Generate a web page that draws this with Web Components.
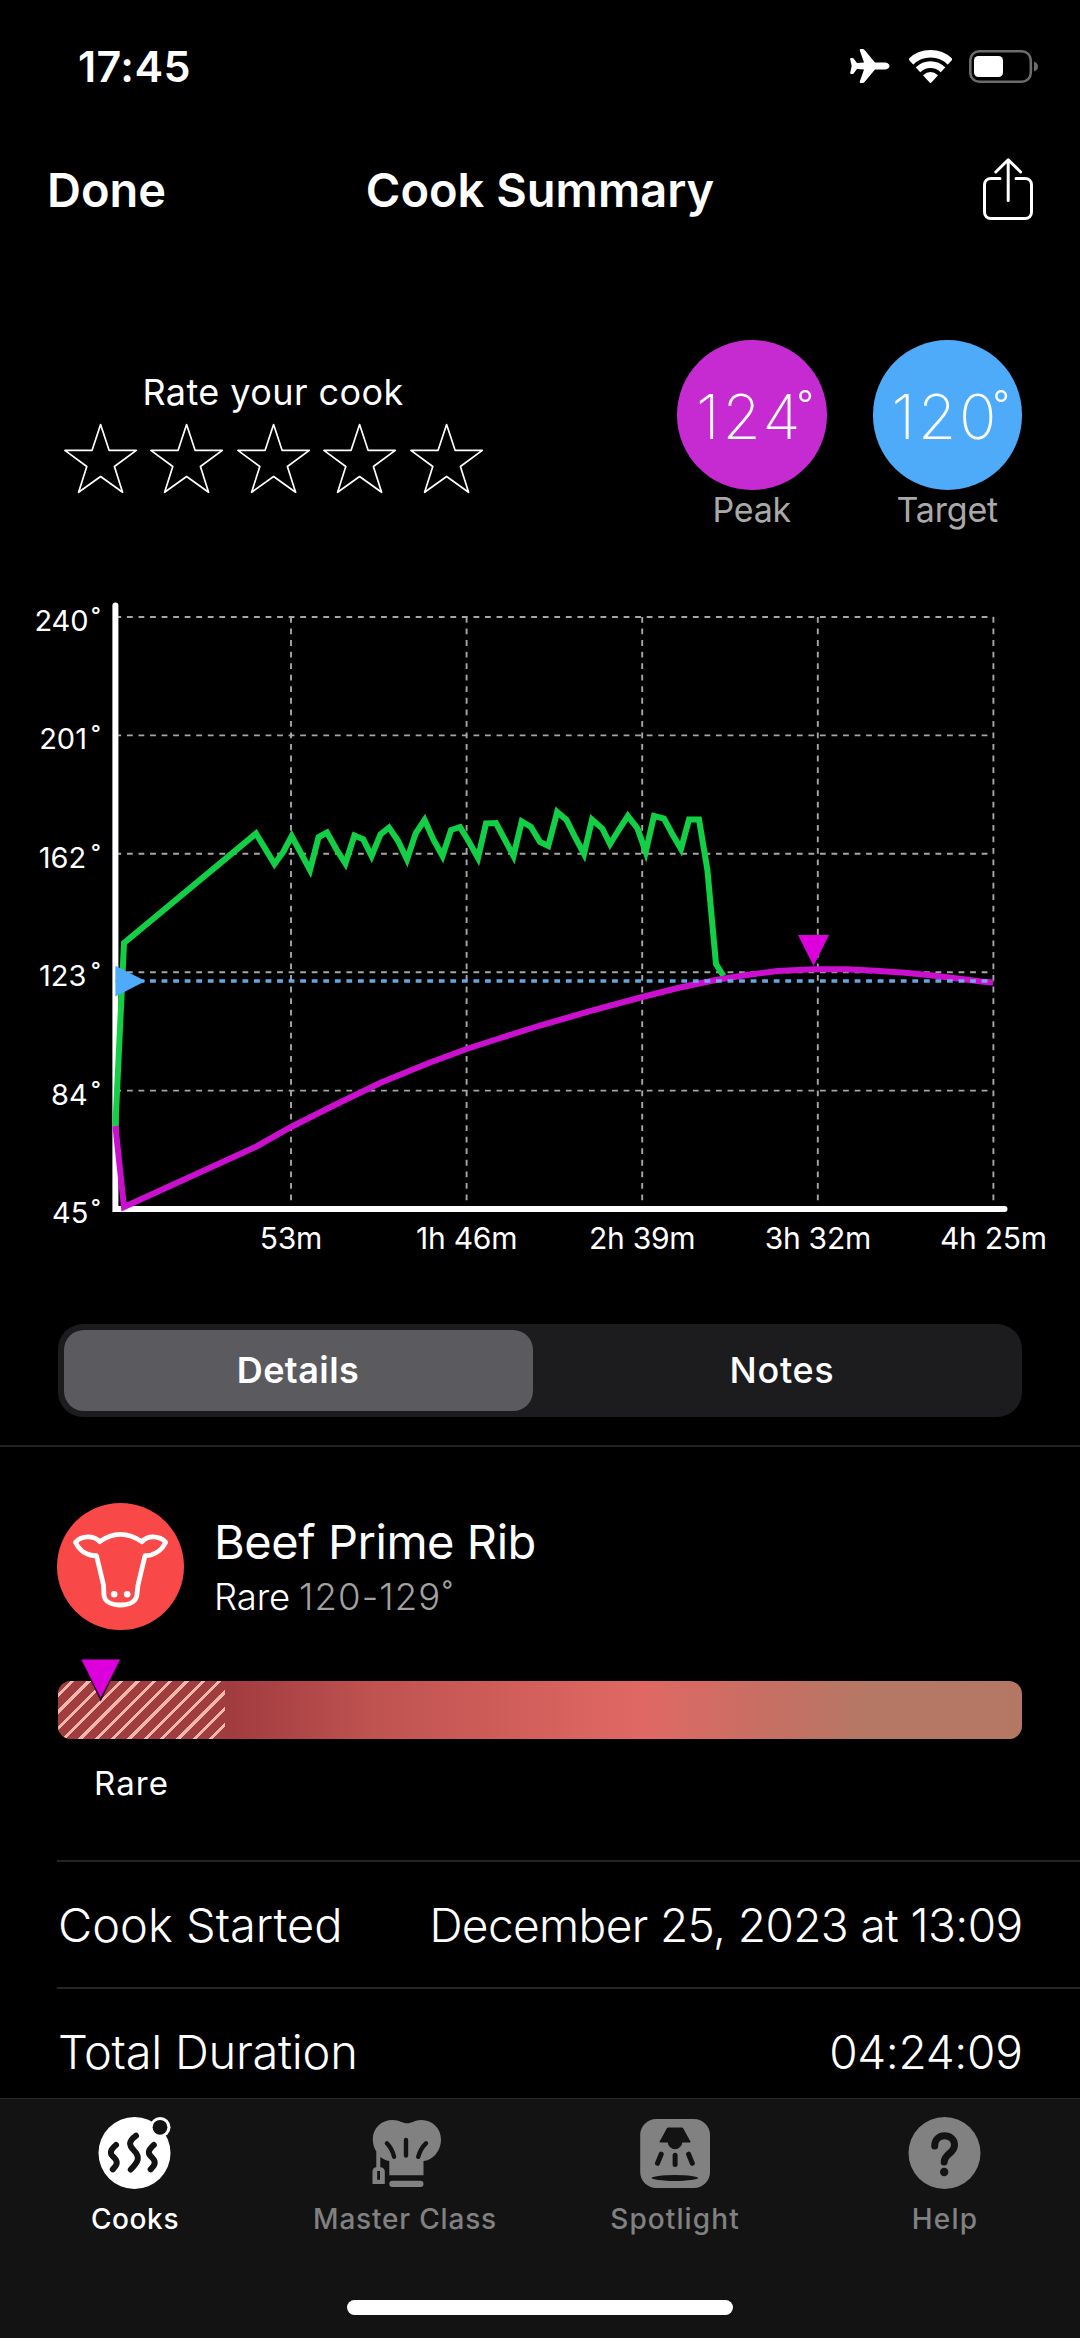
<!DOCTYPE html>
<html lang="en">
<head>
<meta charset="utf-8">
<title>Cook Summary</title>
<style>
    html, body {
        margin: 0;
        background: #000;
    }
    body {
        font-family: Inter, "Liberation Sans", sans-serif;
        color: #fff;
    }
</style>
</head>
<body>
<cook-app>
    <status-bar time="17:45"></status-bar>
    <nav-bar>
        <span slot="left">Done</span>
        Cook Summary
    </nav-bar>
    <cook-overview>
        <star-rating count="5">Rate your cook</star-rating>
        <temp-badge value="124" color="#c52bd0">Peak</temp-badge>
        <temp-badge value="120" color="#4eabf9">Target</temp-badge>
    </cook-overview>
    <cook-chart></cook-chart>
    <segmented-control>
        <segment-item selected>Details</segment-item>
        <segment-item>Notes</segment-item>
    </segmented-control>
    <food-header>
        <span slot="title">Beef Prime Rib</span>
        <span slot="level">Rare</span>
        <span slot="range">120-129</span>
    </food-header>
    <doneness-bar>Rare</doneness-bar>
    <detail-row>
        <span slot="label">Cook Started</span>
        <span style="letter-spacing: -.61px">December 25, 2023 at 13:09</span>
    </detail-row>
    <detail-row>
        <span slot="label" style="letter-spacing: -.25px">Total Duration</span>
        <span style="letter-spacing: -.31px">04:24:09</span>
    </detail-row>
    <tab-bar slot="footer">
        <tab-item icon="cooks" active style="--spacing: .62px">Cooks</tab-item>
        <tab-item icon="hat" style="--spacing: .81px">Master Class</tab-item>
        <tab-item icon="spotlight" style="--spacing: 1.1px">Spotlight</tab-item>
        <tab-item icon="help" style="--spacing: 1.2px">Help</tab-item>
    </tab-bar>
</cook-app>

<script>
(function () {
    // Every element here is a template cloned into an open shadow root.
    function define (name, html, setup) {
        const template = document.createElement('template');
        template.innerHTML = html;
        customElements.define(name, class extends HTMLElement {
            constructor () {
                super();
                this.attachShadow({mode: 'open'});
                this.shadowRoot.appendChild(template.content.cloneNode(true));
            }
            connectedCallback () {
                if (setup) setup(this, this.shadowRoot);
            }
        });
    }

    define('cook-app', `
    <style>
        :host {
            display: flex;
            flex-direction: column;
            width: 1080px;
            height: 2338px;
            overflow: hidden;
        }
        main {
            flex: 1;
            min-height: 0;
            overflow: hidden;
        }
    </style>
    <main><slot></slot></main>
    <slot name="footer"></slot>`);

    define('status-bar', `
    <style>
        :host {
            display: flex;
            align-items: center;
            box-sizing: border-box;
            height: 132px;
            padding: 0 42px 0 78px;
        }
        time {
            flex: 1;
            font-size: 43px;
            font-weight: 600;
            letter-spacing: .4px;
        }
        svg { display: block; }
        .plane { margin-right: 19px; }
        .wifi { margin-right: 17px; }
    </style>
    <time></time>
    <svg class="plane" width="40" height="34" viewBox="0 0 40 34" fill="#fff">
        <path d="M39.5 17c0-2.2-2.5-3.6-5-3.6H25L14.8 1.2C14.1.4 13.3 0 12.4 0h-1.5c-.9 0-1.4.7-1.1 1.5l4.2 11.9-7 .6-3.4-4.4C3.3 9.2 2.8 9 2.3 9H1.2C.5 9 0 9.5.2 10.2L1.7 17 .2 23.8c-.2.7.3 1.2 1 1.2h1.1c.5 0 1-.2 1.3-.6L7 20l7 .6-4.2 11.9c-.3.8.2 1.5 1.1 1.5h1.5c.9 0 1.7-.4 2.4-1.2L25 20.6h9.5c2.5 0 5-1.4 5-3.6z"/>
    </svg>
    <svg class="wifi" width="43" height="33" viewBox="0 0 43 33">
        <clipPath id="wedge"><path d="M21.500 33.500L-6 3.500V-2h55v5.500z"/></clipPath>
        <g clip-path="url(#wedge)" fill="none" stroke="#fff">
            <circle cx="21.500" cy="32" r="28.200" stroke-width="7.400"/>
            <circle cx="21.500" cy="32" r="17.400" stroke-width="6.600"/>
            <circle cx="21.500" cy="32" r="5" stroke-width="10"/>
        </g>
    </svg>
    <svg width="69" height="33" viewBox="0 0 69 33">
        <rect x="1.300" y="1.300" width="60.500" height="30.400" rx="9" fill="none" stroke="#6c6c6c" stroke-width="2.600"/>
        <rect x="5" y="6" width="29" height="21" rx="4.500" fill="#fff"/>
        <path d="M65 11.500c3 1 4 3 4 5s-1 4-4 5z" fill="#6c6c6c"/>
    </svg>`, (el, root) => {
        root.querySelector('time').textContent = el.getAttribute('time');
    });

    define('nav-bar', `
    <style>
        :host {
            display: grid;
            grid-template-columns: 1fr auto 1fr;
            align-items: center;
            box-sizing: border-box;
            height: 116px;
            padding: 0 47px 2px;
            font-size: 47px;
            font-weight: 600;
        }
        svg { display: block; justify-self: end; }
    </style>
    <slot name="left"></slot>
    <span><slot></slot></span>
    <svg width="50" height="62" viewBox="0 0 50 62" fill="none" stroke="#fff" stroke-width="3" stroke-linecap="round" stroke-linejoin="round">
        <path d="M17 20.500H8c-4 0-6.500 2.500-6.500 6.500v27c0 4 2.500 6.500 6.500 6.500h34c4 0 6.500-2.500 6.500-6.500V27c0-4-2.500-6.500-6.500-6.500h-9M25.200 42.500V2.500M12.800 14L25.200 1.800 37.600 14"/>
    </svg>`);

    define('cook-overview', `
    <style>
        :host {
            display: flex;
            box-sizing: border-box;
            height: 312px;
            padding: 92px 58px 0 57px;
            gap: 46px;
        }
        ::slotted(star-rating) { margin-right: auto; }
    </style>
    <slot></slot>`);

    define('star-rating', `
    <style>
        :host {
            display: flex;
            flex-direction: column;
            align-items: center;
            width: 432px;
            padding-top: 31px;
            gap: 9px;
            font-size: 36px;
            line-height: 42px;
            letter-spacing: .42px;
        }
        div { display: flex; }
        svg { display: block; width: 86.400px; height: 80px; }
    </style>
    <span><slot></slot></span>
    <div></div>`, (el, root) => {
        const pts = [];
        for (let i = 0; i < 10; i++) {
            const r = i % 2 ? 14.5 : 37.5;
            const a = Math.PI * (i / 5 - .5);
            pts.push((43.6 + r * Math.cos(a)).toFixed(1) + ',' + (40 + r * Math.sin(a)).toFixed(1));
        }
        root.querySelector('div').innerHTML = `<svg viewBox="0 0 86.4 80"><polygon points="${pts.join(' ')}" fill="none" stroke="#fff" stroke-width="1.7" stroke-linejoin="round"/></svg>`.repeat(Number(el.getAttribute('count')));
    });

    define('temp-badge', `
    <style>
        :host {
            display: flex;
            flex-direction: column;
            align-items: center;
            width: 149.500px;
            color: #a9a9a9;
            font-size: 34px;
            line-height: 40px;
            letter-spacing: -.2px;
        }
        div {
            display: flex;
            align-items: center;
            box-sizing: border-box;
            width: 149.500px;
            height: 149.500px;
            padding: 4px 0 0 19px;
            border-radius: 50%;
            color: #fff;
            font-size: 62px;
            font-weight: 200;
            letter-spacing: 2.800px;
        }
        .deg { margin-left: -6px; }
    </style>
    <div><span class="num"></span><span class="deg">˚</span></div>
    <span><slot></slot></span>`, (el, root) => {
        root.querySelector('div').style.background = el.getAttribute('color');
        root.querySelector('.num').textContent = el.getAttribute('value');
    });

    define('cook-chart', `
    <style>
        :host { display: block; height: 730px; }
        svg { display: block; }
        text { fill: #fff; font-size: 29px; }
        .x text { font-size: 30px; text-anchor: middle; letter-spacing: -.25px; }
        .grid { fill: none; stroke: #a6a6a6; stroke-width: 1.900; stroke-dasharray: 5.800 5.750; }
        .line { fill: none; stroke-width: 6; stroke-miterlimit: 10; }
    </style>
    <svg width="1080" height="730" viewBox="0 560 1080 730">
        <path class="grid"/>
        <path d="M115.400 605.500V1209H1004.500" fill="none" stroke="#fff" stroke-width="6" stroke-linecap="round"/>
        <polyline class="line" stroke="#12cf45" points="115.400,1126 124,943 256,833.500 274.500,864 283.400,851.700 291.700,836 310,870 318.600,837 327,832.500 336.800,850 345.400,863.500 354.400,835.500 363.300,839.300 371.600,856 380.500,834.300 389,827.500 398,840.700 407,859.500 415.700,833.300 424.600,820 433.600,840 442.500,856 451,830 460,827 469,841.700 478,858 486,823.500 496,823 504.500,839 513.500,856 521.700,821.500 531,827 540,842 548.300,846 557.200,812 566.500,820 575.500,838 584,854 592,819.500 602.300,828.500 610,844 619,829.500 627.800,816 637.500,828.500 645.700,852 654,816 664,818.500 672,833.500 681,849 689,819.500 699,819.500 707.400,870 716,964 723.500,976"/>
        <polyline class="line" stroke="#cb0fce" points="115.400,1126 124,1207 256,1146.700 291,1127 334.700,1105 380.500,1082.700 428.800,1063 466.600,1049 499,1038.500 540,1025.500 591.700,1010.700 642.300,997 677.800,988 715.600,980 746.600,975 777.600,971 813.800,969.300 846.500,969.300 875.800,970.700 905,972.700 932.600,975.600 963.600,979.300 981,981.500 993,982.500"/>
        <path d="M115.400 981H993.500" stroke="#6fb4f3" stroke-opacity=".92" stroke-width="3.600" stroke-dasharray="5.800 5.750"/>
        <path d="M115.400 965.800L145.500 981l-30.100 15.500z" fill="#4eabf9"/>
        <path d="M798 935h31L813.600 966z" fill="#dc00dc"/>
        <g class="y"></g>
        <g class="x"></g>
    </svg>`, (el, root) => {
        let grid = '';
        let y = '';
        let x = '';
        [['240', 34.4], ['201', 39.2], ['162', 38.8], ['123', 39], ['84', 51], ['45', 52]].forEach(([label, left], i) => {
            const top = 617 + i * 118.4;
            if (i < 5) grid += `M115.4 ${top}H993.5`;
            y += `<text x="${left}" y="${top + 14}">${label}<tspan x="91.5">˚</tspan></text>`;
        });
        ['53m', '1h 46m', '2h 39m', '3h 32m', '4h 25m'].forEach((label, i) => {
            const left = 291 + i * 175.6;
            grid += `M${left} 617V1207`;
            x += `<text x="${left}" y="1249">${label}</text>`;
        });
        root.querySelector('.grid').setAttribute('d', grid);
        root.querySelector('.y').innerHTML = y;
        root.querySelector('.x').innerHTML = x;
    });

    define('segmented-control', `
    <style>
        :host {
            display: block;
            padding: 34px 58px 28.500px;
            border-bottom: 2px solid #222224;
        }
        div {
            display: grid;
            grid-template-columns: 1fr 1fr;
            height: 92.500px;
            border-radius: 25px;
            background: #1c1c1f;
        }
    </style>
    <div><slot></slot></div>`);

    define('segment-item', `
    <style>
        :host {
            display: flex;
            align-items: center;
            justify-content: center;
            margin: 6px 5.500px 6px 7.500px;
            border-radius: 20px;
            font-size: 36px;
            font-weight: 500;
            letter-spacing: .7px;
        }
        :host([selected]) {
            margin: 6px 7.500px 6px 5.500px;
            background: #5b5a5f;
            font-weight: 600;
            letter-spacing: .45px;
        }
    </style>
    <slot></slot>`);

    define('food-header', `
    <style>
        :host {
            display: flex;
            height: 127px;
            padding: 55.500px 58px 0 57px;
            gap: 30px;
        }
        svg { display: block; flex: none; }
        .text { padding-top: 9px; }
        .title {
            font-size: 47px;
            line-height: 60px;
            letter-spacing: -.45px;
        }
        .sub {
            display: flex;
            gap: 9px;
            font-size: 36.500px;
            font-weight: 350;
            line-height: 50px;
            letter-spacing: -.15px;
        }
        .range {
            color: #a2a2a2;
            font-weight: 300;
            letter-spacing: 1.100px;
        }
        i { font-style: normal; margin-left: 1px; }
    </style>
    <svg width="127" height="127" viewBox="0 0 127 127">
        <circle cx="63.500" cy="63.500" r="63.500" fill="#f94848"/>
        <path d="M42.800 38.700Q52.500 31.300 63.400 31.300T84.900 38.700C87.500 35.500 91 33.800 96 33.800C101 33.800 105.500 35.500 108.700 39.300C105 47 97.500 52.700 88 52.700L81 82L79.800 92.500C79 98.500 72.500 102 63.400 102S47.800 98.500 47 92.500L46.500 82L39.500 52.700C29.500 52.700 22 47 18.500 39.300C21.700 35.500 26 33.800 31 33.800C36 33.800 40 35.500 42.800 38.700Z" fill="none" stroke="#fff" stroke-width="4.800" stroke-linejoin="round"/>
        <circle cx="57.200" cy="91.300" r="3.300" fill="#fff"/>
        <circle cx="70.200" cy="91.300" r="3.300" fill="#fff"/>
    </svg>
    <div class="text">
        <div class="title"><slot name="title"></slot></div>
        <div class="sub">
            <slot name="level"></slot>
            <span class="range"><slot name="range"></slot><i>˚</i></span>
        </div>
    </div>`);

    define('doneness-bar', `
    <style>
        :host { display: block; padding: 51px 58px 53px 57.500px; font-size: 33px; letter-spacing: 1.100px; line-height: 48px; }
        .bar {
            position: relative;
            height: 58px;
            border-radius: 13px;
            background: linear-gradient(90deg, #a03b3f 17.500%, #bf5350 33%, #e06864 60.500%, #ca6e64 72%, #b57864 84%, #b37763);
        }
        .hatch {
            width: 167px;
            height: 58px;
            border-radius: 13px 0 0 13px;
            background: repeating-linear-gradient(-45deg, transparent 0 8.600px, #f1b6ae 8.600px 11.550px) #a13c3f;
        }
        /* peak marker, pinned to the bar's upper edge */
        svg {
            position: absolute;
            left: 21.500px;
            top: -22.500px;
        }
        .label { padding: 20.500px 0 0 36.500px; }
    </style>
    <div class="bar">
        <div class="hatch"></div>
        <svg width="44" height="46" viewBox="0 0 44 46">
            <path d="M1.500 1.500h40.500L21.700 43.500z" fill="#2a0420"/>
            <path d="M2.500 1.500h38.500L21.700 39.500z" fill="#dc00dc"/>
        </svg>
    </div>
    <div class="label"><slot></slot></div>`);

    define('detail-row', `
    <style>
        :host {
            display: flex;
            align-items: center;
            justify-content: space-between;
            box-sizing: border-box;
            height: 127px;
            margin-left: 57px;
            padding: 0 57.500px 0 1px;
            border-top: 2px solid #252527;
            font-size: 46px;
            font-weight: 300;
        }
        ::slotted([slot=label]) { font-size: 47px; }
    </style>
    <slot name="label"></slot>
    <slot></slot>`);

    define('tab-bar', `
    <style>
        :host {
            display: flex;
            flex-direction: column;
            align-items: center;
            box-sizing: border-box;
            height: 240px;
            border-top: 1px solid #2b2b2b;
            background: #131313;
        }
        nav {
            display: grid;
            grid-template-columns: repeat(4, 270px);
            height: 201px;
        }
        .home {
            width: 386px;
            height: 15px;
            border-radius: 8px;
            background: #fff;
        }
    </style>
    <nav><slot></slot></nav>
    <div class="home"></div>`);

    // 72x72 tab glyphs; cut-outs take the colour of the bar
    const icons = {
        cooks: `
            <circle cx="35.500" cy="36" r="36" fill="currentColor"/>
            <circle cx="61.200" cy="10.300" r="10.300" fill="currentColor"/>
            <circle cx="61" cy="10.300" r="7.400" fill="#131313"/>
            <path d="M37 18.700C29 24.500 30 28.500 35 33.500C41.500 40.500 39.500 44.500 31.800 52.500M17 28C10 34 11 37 15 40.500C19.500 45 18 48 13.800 52.300M54.800 28C48 34 49 37 53 40.500C57.500 45 56 48 51.700 52.300" fill="none" stroke="#131313" stroke-width="6" stroke-linecap="round"/>`,
        hat: `
            <g transform="translate(1.500 0)">
            <path d="M22 3C29 3 32 6.300 36.700 6.300S44 3 51 3C62 3 70.500 11.500 70.500 22.500C70.500 34 62 43.500 53 44V58.300H18.800V44C15.500 43.500 12 41.800 9.800 40V50.300C12.500 50.300 14.300 52 14.300 54.500V67H2V54.500C2 52 3.500 50.300 5.800 50.300V34.500C3.500 31 2.300 27 2.300 22C2.300 11 11 3 22 3Z" fill="currentColor"/>
            <rect x="18.800" y="63.700" width="34.200" height="6.200" rx="3" fill="currentColor"/>
            <rect x="6.700" y="54" width="2.800" height="8.800" fill="#131313"/>
            <path d="M16.400 26.300Q21.500 31.500 23.600 39.800M35.500 23V38.500M55.500 26.300Q50 31.500 47.700 39.800" fill="none" stroke="#131313" stroke-width="4.400" stroke-linecap="round"/>
            </g>`,
        spotlight: `
            <rect x="1.200" y="2" width="69.800" height="69" rx="16" fill="currentColor"/>
            <path d="M28.500 11H43.500L51.200 25H42.800A6.800 6.800 0 0 1 29.200 25H20.900Z" fill="#131313" stroke="#131313" stroke-linejoin="round"/>
            <path d="M22.200 37.200L18.500 46.300M36.100 38.300V47.500M49.600 37.200L53.300 46.300" fill="none" stroke="#131313" stroke-width="5" stroke-linecap="round"/>
            <ellipse cx="35.900" cy="61" rx="23.300" ry="2.900" fill="#131313"/>`,
        help: `
            <circle cx="35.500" cy="36" r="36" fill="currentColor"/>
            <path d="M25.700 29C25.700 15 45.500 16 45.500 28C45.500 36.500 35.500 36.500 35.200 45" fill="none" stroke="#131313" stroke-width="7" stroke-linecap="round"/>
            <circle cx="35.200" cy="55" r="4.200" fill="#131313"/>`
    };

    define('tab-item', `
    <style>
        :host {
            display: flex;
            flex-direction: column;
            align-items: center;
            padding-top: 18px;
            gap: 9.500px;
            color: #818181;
            font-size: 28px;
            font-weight: 500;
            line-height: 40px;
            letter-spacing: var(--spacing);
        }
        :host([active]) { color: #fff; }
        svg { display: block; overflow: visible; }
    </style>
    <svg width="72" height="72" viewBox="0 0 72 72"></svg>
    <span><slot></slot></span>`, (el, root) => {
        root.querySelector('svg').innerHTML = icons[el.getAttribute('icon')];
    });
})();
</script>
</body>
</html>
